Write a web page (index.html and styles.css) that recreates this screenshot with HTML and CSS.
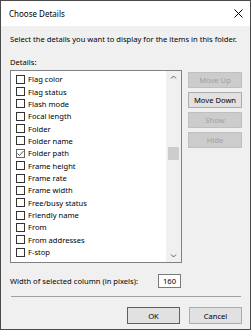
FILE: index.html
```html
<!DOCTYPE html>
<html>
<head>
<meta charset="utf-8">
<link rel="stylesheet" href="styles.css">
</head>
<body>
<div class="window">
  <div class="titlebar">
    <span class="title">Choose Details</span>
    <svg class="close" width="9" height="9" viewBox="0 0 9 9"><path d="M0.5 0.5 L8.5 8.5 M8.5 0.5 L0.5 8.5" stroke="#000" stroke-width="1" fill="none"/></svg>
  </div>
  <div class="content">
    <div class="intro">Select the details you want to display for the items in this folder.</div>
    <div class="label">Details:</div>
    <div class="main">
      <div class="list">
        <div class="items">
          <div class="item"><span class="box"></span>Flag color</div>
          <div class="item"><span class="box"></span>Flag status</div>
          <div class="item"><span class="box"></span>Flash mode</div>
          <div class="item"><span class="box"></span>Focal length</div>
          <div class="item"><span class="box"></span>Folder</div>
          <div class="item"><span class="box"></span>Folder name</div>
          <div class="item"><span class="box checked"><svg width="9" height="9" viewBox="0 0 9 9"><path d="M1.5 4.5 L3.5 6.5 L7.5 2" stroke="#555" stroke-width="1" fill="none"/></svg></span>Folder path</div>
          <div class="item"><span class="box"></span>Frame height</div>
          <div class="item"><span class="box"></span>Frame rate</div>
          <div class="item"><span class="box"></span>Frame width</div>
          <div class="item"><span class="box"></span>Free/busy status</div>
          <div class="item"><span class="box"></span>Friendly name</div>
          <div class="item"><span class="box"></span>From</div>
          <div class="item"><span class="box"></span>From addresses</div>
          <div class="item"><span class="box"></span>F-stop</div>
        </div>
        <div class="scrollbar">
          <svg class="arrow" width="15" height="13" viewBox="0 0 15 13"><path d="M5 7.5 L7.5 5 L10 7.5" stroke="#606060" stroke-width="1" fill="none"/></svg>
          <div class="track"><div class="thumb"></div></div>
          <svg class="arrow" width="15" height="13" viewBox="0 0 15 13"><path d="M5 5.5 L7.5 8 L10 5.5" stroke="#606060" stroke-width="1" fill="none"/></svg>
        </div>
      </div>
      <div class="buttons">
        <div class="btn disabled">Move Up</div>
        <div class="btn">Move Down</div>
        <div class="btn disabled">Show</div>
        <div class="btn disabled">Hide</div>
      </div>
    </div>
    <div class="width-row">
      <span>Width of selected column (in pixels):</span>
      <span class="input">160</span>
    </div>
    <div class="separator"></div>
    <div class="footer">
      <div class="btn wide default">OK</div>
      <div class="btn wide">Cancel</div>
    </div>
  </div>
</div>
</body>
</html>
```
FILE: styles.css
```css
* { box-sizing: border-box; }
html, body { margin: 0; padding: 0; background: #fff; }
body {
  font-family: "Noto Sans", "Liberation Sans", sans-serif;
  font-size: 7.6px;
  color: #000;
}
.window {
  width: 251px;
  height: 330px;
  border: 1px solid #4a4a4a;
  background: #f0f0f0;
  display: flex;
  flex-direction: column;
}
.titlebar {
  height: 25px;
  background: #fff;
  display: flex;
  align-items: center;
  justify-content: space-between;
  padding: 0 7px 0 8px;
  font-size: 8px;
}
.close { display: block; }
.content {
  display: flex;
  flex-direction: column;
  padding: 7px 8px 0 9px;
}
.intro, .label { line-height: 12px; height: 12px; }
.label { margin-top: 11px; }
.main {
  display: flex;
  margin-top: 2px;
  gap: 6px;
}
.list {
  width: 172px;
  height: 193px;
  border: 1px solid #828282;
  background: #fff;
  display: flex;
}
.items {
  flex: 1;
  padding-top: 2px;
  overflow: hidden;
}
.item {
  height: 12.36px;
  display: flex;
  align-items: center;
  padding-left: 5px;
  white-space: nowrap;
}
.box {
  width: 9px;
  height: 9px;
  border: 1px solid #333;
  background: #fff;
  margin-right: 3px;
  flex: none;
  position: relative;
}
.box.checked { border-color: #666; }
.box svg { position: absolute; left: -1px; top: -1px; }
.scrollbar {
  width: 15px;
  background: #f0f0f0;
  display: flex;
  flex-direction: column;
}
.arrow { display: block; flex: none; }
.track {
  flex: 1;
  padding-top: 63px;
  display: flex;
  justify-content: center;
}
.thumb {
  width: 11px;
  height: 13px;
  background: #cdcdcd;
}
.buttons {
  display: flex;
  flex-direction: column;
  gap: 4px;
  padding-top: 2px;
}
.btn {
  width: 54px;
  height: 16px;
  border: 1px solid #adadad;
  background: #e1e1e1;
  display: flex;
  align-items: center;
  justify-content: center;
  white-space: nowrap;
}
.btn.disabled {
  background: #cccccc;
  border-color: #bfbfbf;
  color: #a0a0a0;
}
.width-row {
  width: 171px;
  margin-top: 11px;
  display: flex;
  justify-content: space-between;
  align-items: center;
}
.input {
  width: 23px;
  height: 14px;
  border: 1px solid #7a7a7a;
  background: #fff;
  display: flex;
  align-items: center;
  justify-content: center;
}
.separator {
  margin-top: 8px;
  margin-left: 1px;
  height: 1px;
  width: 230px;
  background: #a0a0a0;
}
.footer {
  display: flex;
  justify-content: flex-end;
  gap: 9px;
  margin-top: 10px;
}
.btn.wide { width: 53px; height: 17px; }
.btn.default { border-color: #0078d7; }
```
